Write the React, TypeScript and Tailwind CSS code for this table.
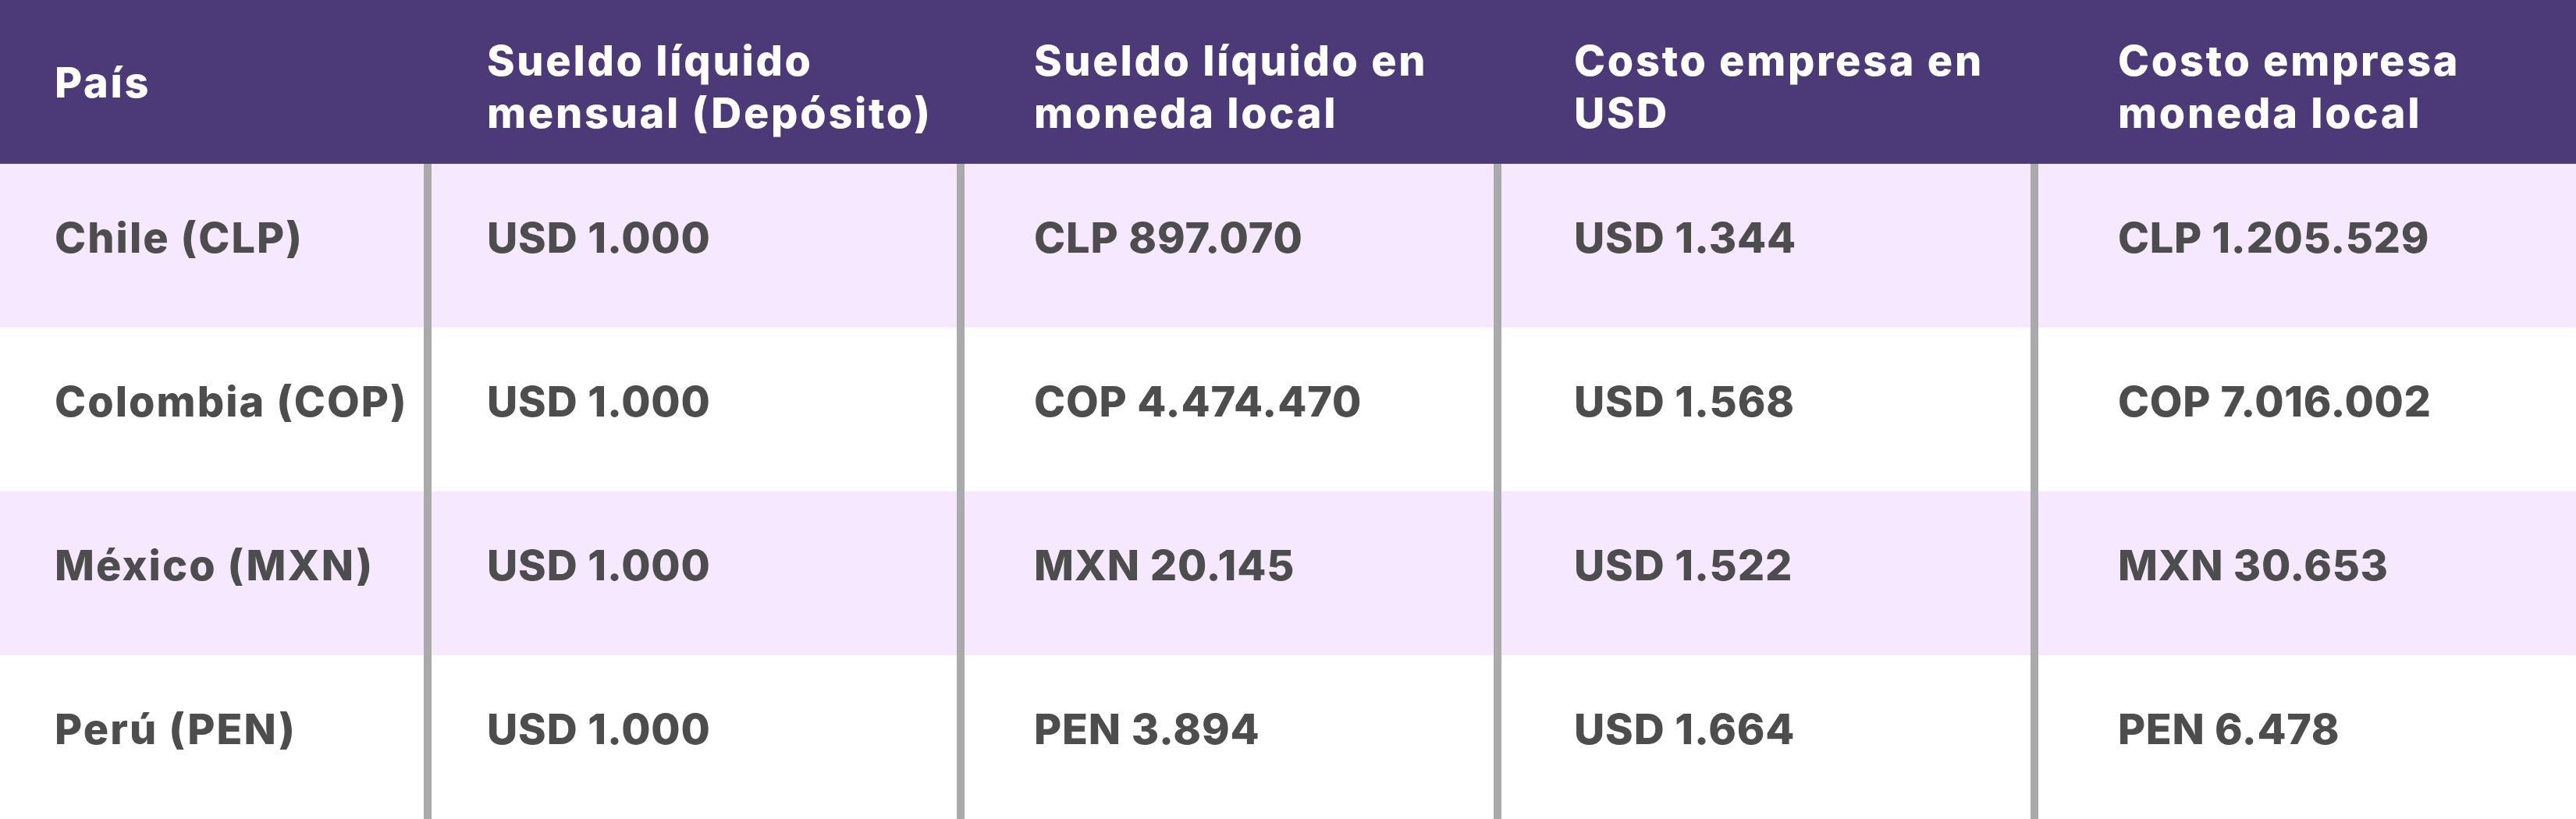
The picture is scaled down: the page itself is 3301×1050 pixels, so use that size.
import React from "react";

type Row = { pais: string; deposito: string; local: string; costoUsd: string; costoLocal: string };

const rows: Row[] = [
  { pais: "Chile (CLP)", deposito: "USD 1.000", local: "CLP 897.070", costoUsd: "USD 1.344", costoLocal: "CLP 1.205.529" },
  { pais: "Colombia (COP)", deposito: "USD 1.000", local: "COP 4.474.470", costoUsd: "USD 1.568", costoLocal: "COP 7.016.002" },
  { pais: "México (MXN)", deposito: "USD 1.000", local: "MXN 20.145", costoUsd: "USD 1.522", costoLocal: "MXN 30.653" },
  { pais: "Perú (PEN)", deposito: "USD 1.000", local: "PEN 3.894", costoUsd: "USD 1.664", costoLocal: "PEN 6.478" },
];

// column widths and left paddings measured from the design
const cols = [
  { w: "w-[543px]", pl: "pl-[70px]", border: "", track: "tracking-[0.038em]" },
  { w: "w-[683px]", pl: "pl-[71px]", border: "border-l-[10px]", track: "tracking-[0.016em]" },
  { w: "w-[688px]", pl: "pl-[89px]", border: "border-l-[10px]", track: "tracking-[0.016em]" },
  { w: "w-[688px]", pl: "pl-[93px]", border: "border-l-[10px]", track: "tracking-[0.016em]" },
  { w: "flex-1", pl: "pl-[102px]", border: "border-l-[10px]", track: "tracking-[0.012em]" },
];

const headers = ["País", "Sueldo líquido mensual (Depósito)", "Sueldo líquido en moneda local", "Costo empresa en USD", "Costo empresa moneda local"];

export default function App() {
  return (
    <div className="w-[3301px] h-[1050px] bg-white font-['Inter',sans-serif]">
      {/* Header */}
      <div className="flex h-[210px] bg-[#4b3978] text-white font-extrabold text-[54px] leading-[67px] tracking-[0.05em]">
        {headers.map((h, i) => (
          <div
            key={h}
            className={`${cols[i].w} ${cols[i].pl} ${cols[i].border} border-transparent shrink-0 flex items-center ${i === 0 ? "pt-0" : "pt-[12px]"}`}
          >
            <span className={i === 1 ? "max-w-[600px]" : "max-w-[570px]"}>{h}</span>
          </div>
        ))}
      </div>

      {/* Body */}
      {rows.map((r, idx) => {
        const values = [r.pais, r.deposito, r.local, r.costoUsd, r.costoLocal];
        return (
          <div
            key={r.pais}
            className={`flex h-[210px] text-[#4d4d4d] font-extrabold text-[54px] ${idx % 2 === 0 ? "bg-[#f6e8fe]" : "bg-white"}`}
          >
            {values.map((v, i) => (
              <div
                key={i}
                className={`${cols[i].w} ${cols[i].pl} ${cols[i].border} ${cols[i].track} border-[#aaaaaa] shrink-0 flex items-center pb-[22px] whitespace-nowrap`}
              >
                {v}
              </div>
            ))}
          </div>
        );
      })}
    </div>
  );
}
